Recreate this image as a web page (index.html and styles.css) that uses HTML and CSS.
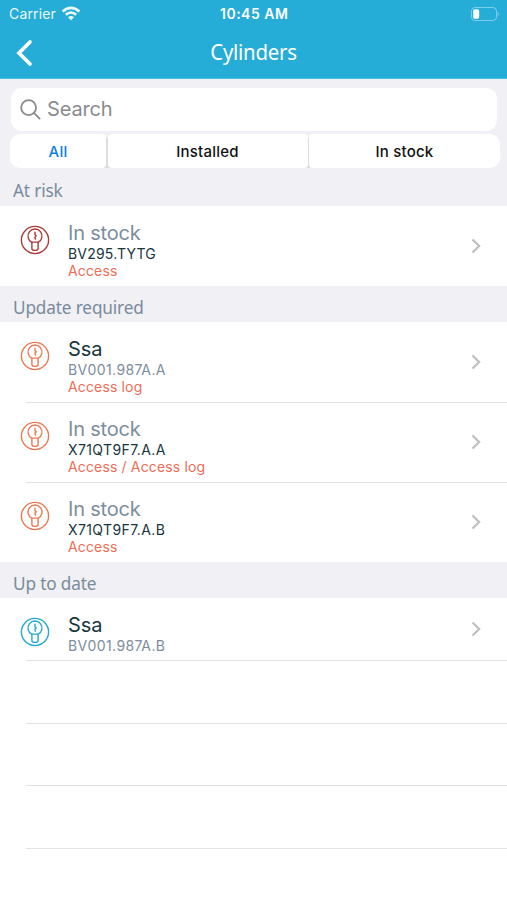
FILE: index.html
```html
<!DOCTYPE html>
<html lang="en">
<head>
<meta charset="utf-8">
<title>Cylinders</title>
<link rel="stylesheet" href="styles.css">
</head>
<body>
<svg width="0" height="0" class="defs">
  <symbol id="cylinder" viewBox="0 0 30 30">
    <circle cx="15" cy="15" r="13.6"/>
    <path d="M11.9 17.3A7 7 0 1 1 18.1 17.3"/>
    <path d="M11.9 17.1H18.1V23.5Q18.1 25.4 15 25.4T11.9 23.5Z"/>
    <path d="M15 6.8V9.7L16.1 10.8L14.9 12.2L15.4 13.4V14.7"/>
  </symbol>
  <symbol id="chevron" viewBox="0 0 10 16"><path d="M1.5 1.5L8.2 8L1.5 14.5"/></symbol>
</svg>
<header class="header">
  <div class="status">
    <div class="carrier"><span>Carrier</span>
      <svg class="wifi" viewBox="0 0 20 15"><path d="M1.6 5.5Q10-1.8 18.4 5.5M4.8 8.8Q10 4.2 15.2 8.8"/><path class="dot" d="M7 11.2Q10 8.8 13 11.2L10 14.2Z"/></svg>
    </div>
    <time class="time">10:45 AM</time>
    <svg class="battery" viewBox="0 0 32 16"><rect class="case" x="3.5" y="1.5" width="25" height="13" rx="3.5"/><rect class="level" x="5.2" y="3.2" width="6" height="9.6" rx="1.8"/><path class="cap" d="M29.7 5.5Q32 8 29.7 10.5Z"/></svg>
  </div>
  <nav class="nav">
    <svg class="back" viewBox="0 0 18 28"><path d="M15 3L4 14L15 25"/></svg>
    <h1>Cylinders</h1>
  </nav>
</header>
<div class="filters">
  <div class="search"><svg viewBox="0 0 22 22"><circle cx="9" cy="9" r="7.8"/><path d="M14.6 14.6L20.5 20.5"/></svg><span>Search</span></div>
  <div class="tabs"><div class="tab active">All</div><div class="tab">Installed</div><div class="tab">In stock</div></div>
</div>
<main>
  <h2 class="first"><span>At risk</span></h2>
  <div class="row danger"><svg class="icon"><use href="#cylinder"/></svg><div class="info"><p class="name muted">In stock</p><p class="code">BV295.TYTG</p><p class="alert">Access</p></div><svg class="chevron"><use href="#chevron"/></svg></div>
  <h2><span>Update required</span></h2>
  <div class="row warn"><svg class="icon"><use href="#cylinder"/></svg><div class="info"><p class="name title">Ssa</p><p class="code unit muted">BV001.987A.A</p><p class="alert">Access log</p></div><svg class="chevron"><use href="#chevron"/></svg></div>
  <div class="row warn ruled"><svg class="icon"><use href="#cylinder"/></svg><div class="info"><p class="name muted">In stock</p><p class="code unit">X71QT9F7.A.A</p><p class="alert">Access / Access log</p></div><svg class="chevron"><use href="#chevron"/></svg></div>
  <div class="row warn ruled"><svg class="icon"><use href="#cylinder"/></svg><div class="info"><p class="name muted">In stock</p><p class="code unit">X71QT9F7.A.B</p><p class="alert">Access</p></div><svg class="chevron"><use href="#chevron"/></svg></div>
  <h2><span>Up to date</span></h2>
  <div class="row ok short"><svg class="icon"><use href="#cylinder"/></svg><div class="info"><p class="name title">Ssa</p><p class="code unit muted">BV001.987A.B</p></div><svg class="chevron"><use href="#chevron"/></svg></div>
  <div class="blank"></div><div class="blank"></div><div class="blank"></div><div class="blank"></div>
</main>
</body>
</html>
```
FILE: styles.css
```css
* { box-sizing: border-box; }
body { margin: 0; height: 900px; overflow: hidden; background: #fff; color: #17363d; font-family: Inter, "Liberation Sans", sans-serif; }
h1, h2, p { margin: 0; font-weight: 400; }
svg { fill: none; stroke: currentColor; flex: none; }
.defs { display: none; }
.header { height: 79px; background: #25add7; color: #fff; border-bottom: 1px solid #4dbce0; }
.status { height: 27px; padding: 0 7px 0 9px; display: grid; grid-template-columns: 246px 1fr; grid-template-columns: 211px auto 1fr; align-items: center; font-size: 14px; }
.carrier { display: flex; align-items: center; gap: 5px; opacity: .92; letter-spacing: .15px; }
.wifi { width: 20px; height: 15px; stroke-width: 2.6; }
.wifi .dot { fill: currentColor; stroke: none; }
.time { font-size: 14px; font-weight: 600; letter-spacing: .5px; }
.battery { width: 32px; height: 16px; justify-self: end; }
.battery .case { opacity: .4; }
.battery .level { fill: #fff; stroke: none; }
.battery .cap { fill: #fff; stroke: none; opacity: .4; }
.nav { height: 51px; padding: 0 15px; display: grid; grid-template-columns: 1fr auto 1fr; align-items: center; }
.back { width: 18px; height: 28px; stroke-width: 3.7; stroke-linecap: round; }
h1 { margin: -4px -4px 0; font: 400 22px/30px "Noto Sans", sans-serif; letter-spacing: -.3px; transform: scaleX(.93); }
.filters { height: 89px; padding: 9px 7px 0 10px; background: #f0f0f5; }
.search { height: 43px; margin: 0 3px 3px 1px; padding: 0 0 1px 9px; display: flex; align-items: center; gap: 6px; border-radius: 11px; background: #fff; color: #8b8b8f; font-size: 20px; letter-spacing: -.15px; }
.search svg { width: 21px; height: 21px; stroke-width: 1.9; stroke-linecap: round; }
.tabs { height: 34px; display: grid; grid-template-columns: 96px 200px 1fr; gap: 1.5px; background: linear-gradient(#dedee2, #dedee2) 94px 4px / 206px 30px no-repeat; }
.tab { display: flex; align-items: center; justify-content: center; border-radius: 4px; background: #fff; color: #111; font-size: 15px; font-weight: 500; letter-spacing: .2px; }
.tab:first-child { border-radius: 10px 4px 4px 10px; }
.tab:last-child { border-radius: 4px 10px 10px 4px; }
.tab.active { color: #087dec; }
h2 { height: 36px; padding: 0 13px; display: flex; align-items: center; background: #f0f0f5; color: #798b9b; font: 400 18px/36px "Noto Sans", sans-serif; letter-spacing: -.15px; }
h2 span { margin-top: 6px; transform: scaleX(.955); transform-origin: left; }
h2.first { height: 38px; }
.row { height: 80px; display: flex; align-items: flex-start; padding: 0 26.5px 0 19.5px; position: relative; }
.ruled::before, .blank::before { content: ""; position: absolute; top: 0; left: 26px; right: 0; height: 1px; background: #e3e3e6; }
.icon { width: 30px; height: 30px; margin-top: 18.5px; stroke-width: 1.4; }
.info { flex: 1; padding: 15px 0 0 18.5px; }
.name { font-size: 20px; line-height: 24px; letter-spacing: -.2px; }
.title { letter-spacing: -.05px; }
.code { font-size: 14px; line-height: 17px; letter-spacing: .2px; }
.unit { letter-spacing: .4px; }
.alert { font-size: 14px; line-height: 18px; letter-spacing: .15px; color: #ef6d56; }
.muted { color: #7c8d9d; }
.danger .icon { color: #ac3a35; }
.warn .icon { color: #e87b55; }
.ok .icon { color: #20a9d2; }
.chevron { width: 10px; height: 16px; margin-top: 32px; color: #bdbdc0; stroke-width: 2.1; }
.short { height: 62px; }
.short .chevron { margin-top: 23px; }
.blank { position: relative; height: 62.5px; }
```
